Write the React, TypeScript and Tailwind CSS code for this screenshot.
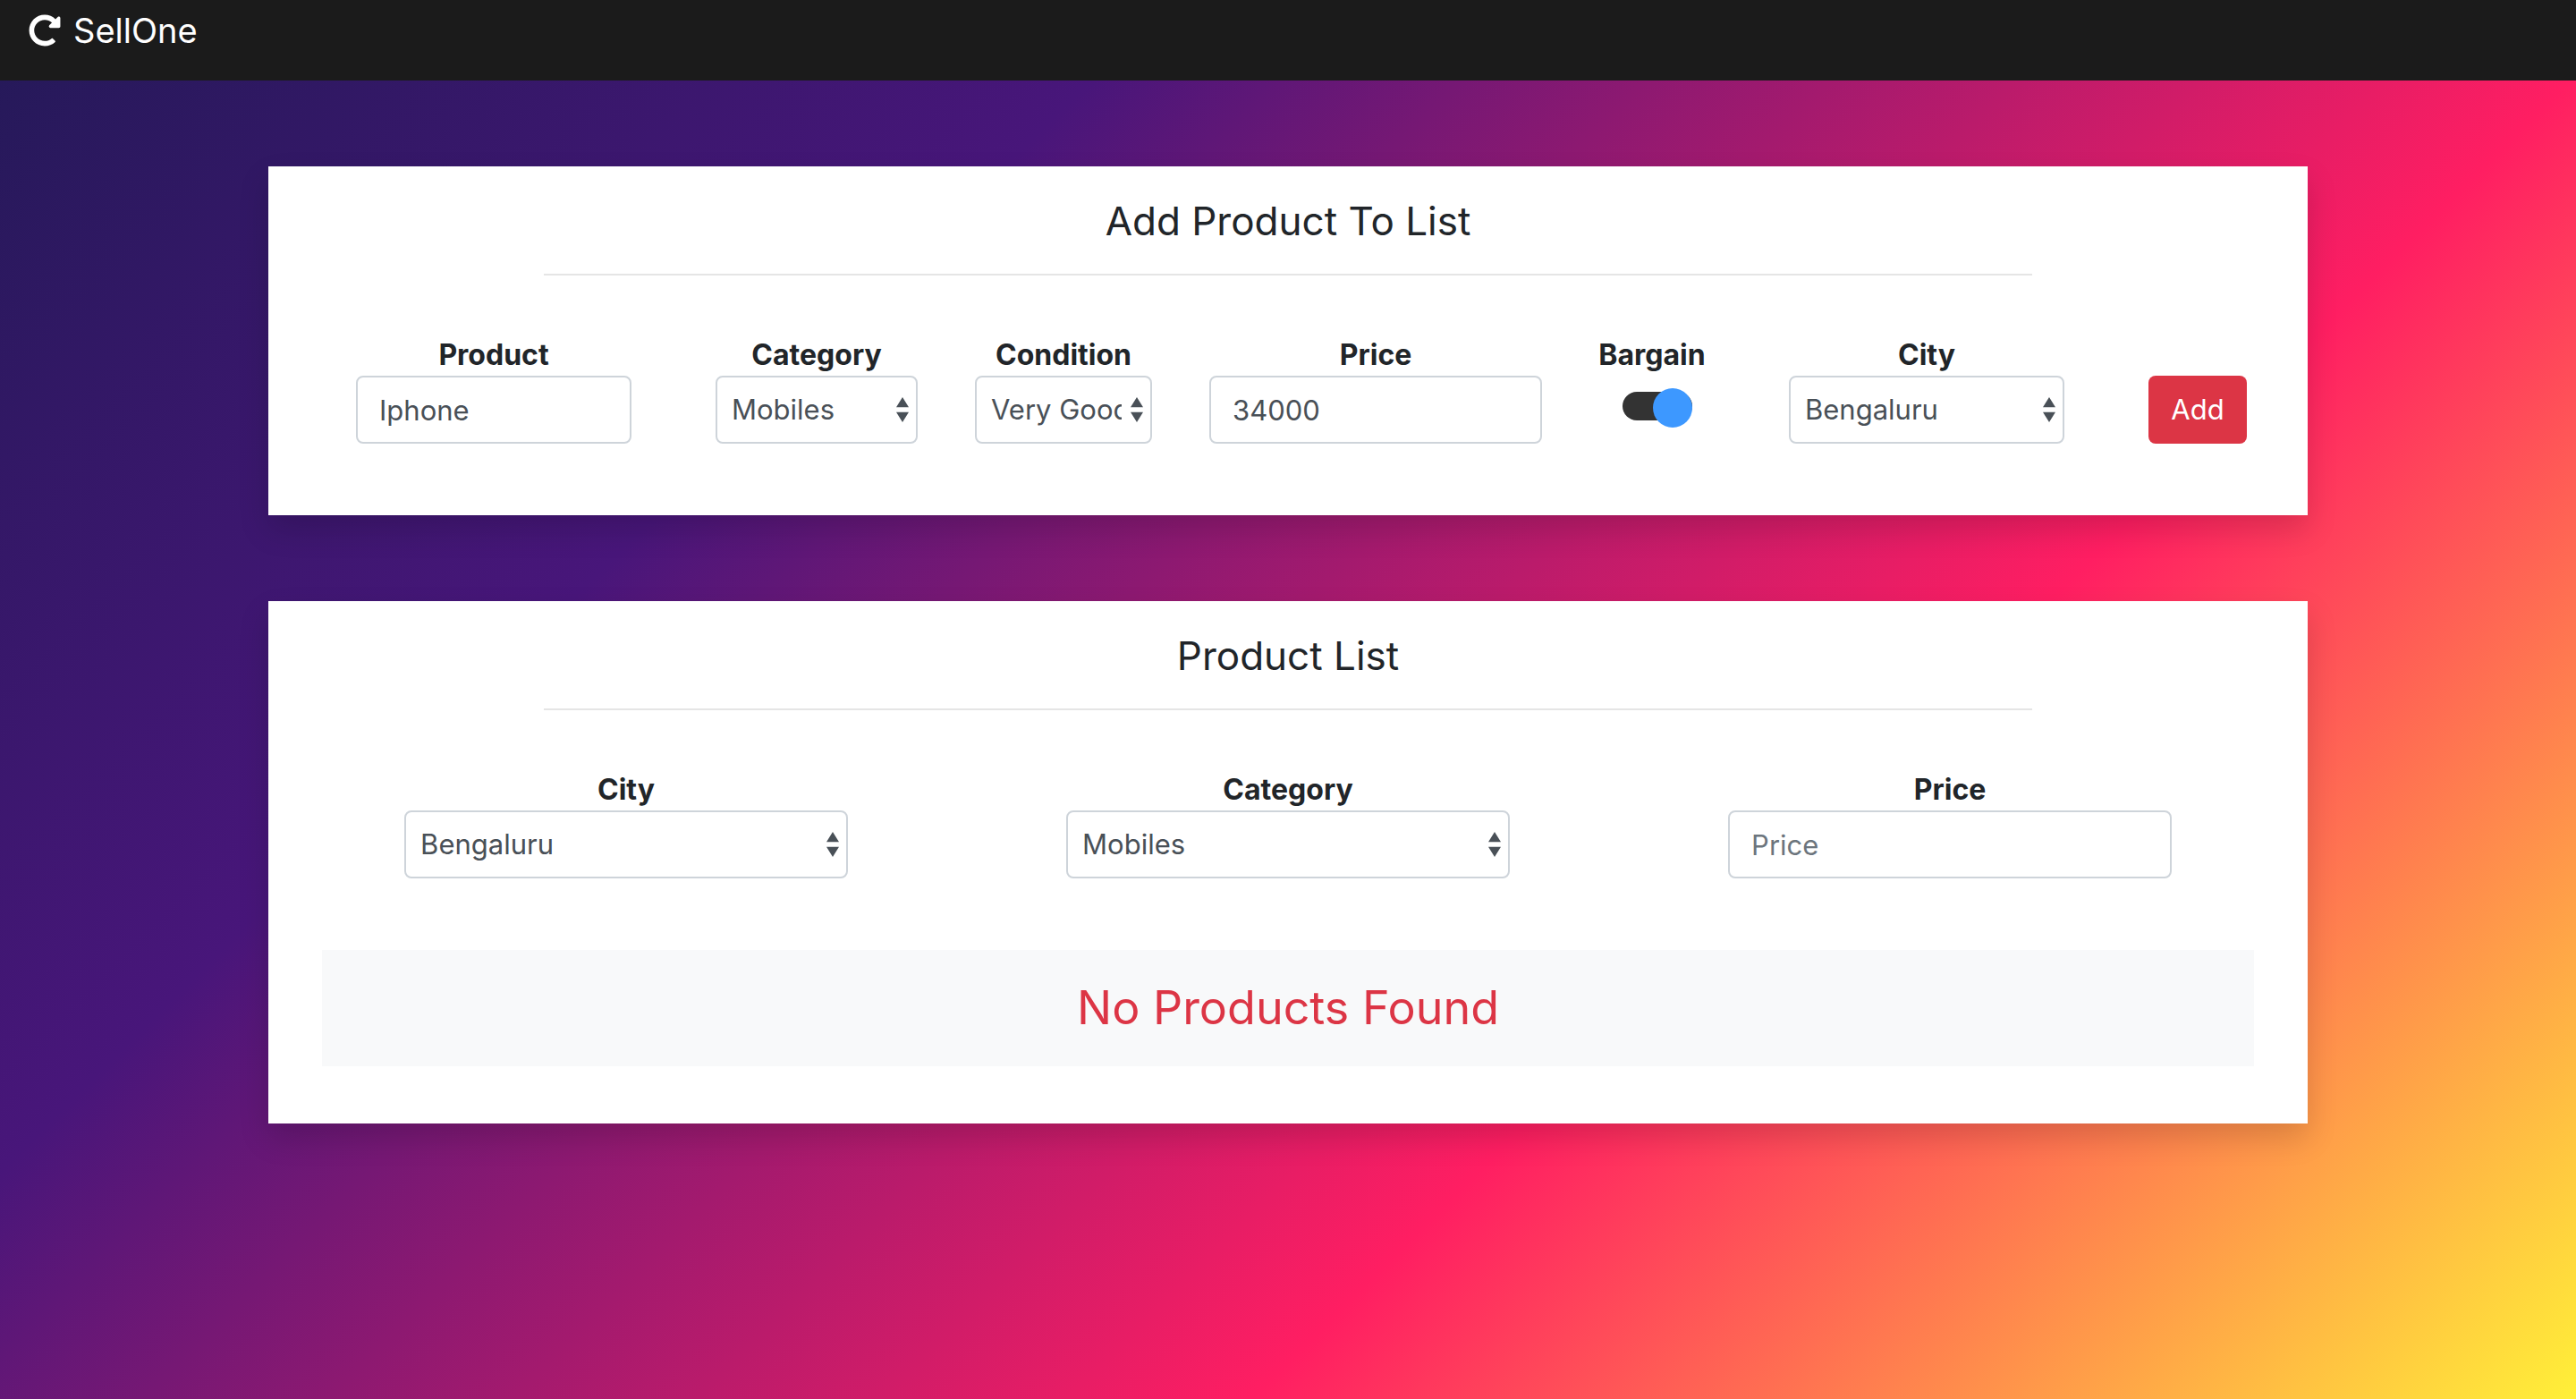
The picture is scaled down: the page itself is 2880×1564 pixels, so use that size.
import { useState } from "react";
import type { ReactNode } from "react";
import { FaRedoAlt } from "react-icons/fa";

const control =
  "block h-[76px] w-full rounded-lg border-2 border-[#ced4da] bg-white text-[31px] leading-[48px] text-[#495057] outline-none";

type SelectProps = { id: string; options: string[] };

function Select({ id, options }: SelectProps) {
  const [value, setValue] = useState(options[0]);
  return (
    <div className="relative">
      <select
        id={id}
        value={value}
        onChange={(e) => setValue(e.target.value)}
        className={`${control} appearance-none pr-8 pl-4`}
      >
        {options.map((option) => (
          <option key={option}>{option}</option>
        ))}
      </select>
      <svg
        viewBox="0 0 4 5"
        className="pointer-events-none absolute top-6 right-2.5 h-7 w-3.5 fill-[#495057]"
        preserveAspectRatio="none"
        aria-hidden="true"
      >
        <path d="M2 0L0 2h4zm0 5L0 3h4z" />
      </svg>
    </div>
  );
}

type FieldProps = { id: string; label: string; children: ReactNode };

function Field({ id, label, children }: FieldProps) {
  return (
    <div>
      <label htmlFor={id} className="block text-center leading-[46px] font-bold">
        {label}
      </label>
      {children}
    </div>
  );
}

function Card({ title, children }: { title: string; children: ReactNode }) {
  return (
    <section className="bg-white px-[60px] pt-8 shadow-[0_16px_32px_rgba(0,0,0,0.15)]">
      <h2 className="text-center text-[44px] leading-[58px]">{title}</h2>
      <hr className="mx-[11.5%] mt-[30px] border-t-2 border-[#e5e5e5]" />
      {children}
    </section>
  );
}

export default function App() {
  const [bargain, setBargain] = useState(true);
  return (
    <div className="flex min-h-screen flex-col font-[Inter,sans-serif] text-[32px] text-[#212529]">
      <header className="h-[90px] bg-[#1b1b1b] px-8">
        <a href="#" className="flex h-[68px] items-center gap-3.5 text-[38px] text-white">
          <FaRedoAlt className="size-9" aria-hidden="true" />
          SellOne
        </a>
      </header>

      <main className="flex grow flex-col items-center gap-24 bg-[linear-gradient(135deg,#26195a_0%,#48167a_28%,#ff1e62_66%,#fff038_100%)] py-24">
        <div className="flex w-full max-w-[2280px] flex-col gap-24">
          <Card title="Add Product To List">
            <form
              className="mr-2 ml-[38px] grid grid-cols-[308fr_94fr_226fr_64fr_198fr_64fr_372fr_45fr_156fr_75fr_308fr_94fr_110fr] items-end pt-[66px] pb-20"
              onSubmit={(e) => e.preventDefault()}
            >
              <Field id="product" label="Product">
                <input id="product" defaultValue="Iphone" className={`${control} px-6`} />
              </Field>
              <span />
              <Field id="category" label="Category">
                <Select id="category" options={["Mobiles", "Laptops", "Books"]} />
              </Field>
              <span />
              <Field id="condition" label="Condition">
                <Select id="condition" options={["Very Good", "Good", "Fair"]} />
              </Field>
              <span />
              <Field id="price" label="Price">
                <input id="price" defaultValue="34000" className={`${control} px-6`} />
              </Field>
              <span />
              <Field id="bargain" label="Bargain">
                <div className="flex h-[76px] justify-center pt-[18px] pl-3">
                  <div className="relative h-8 w-[78px] rounded-full bg-[#333]">
                    <input
                      id="bargain"
                      type="checkbox"
                      role="switch"
                      checked={bargain}
                      onChange={(e) => setBargain(e.target.checked)}
                      className="absolute -top-1 left-0 size-11 cursor-pointer appearance-none rounded-full bg-[#999] checked:right-0 checked:left-auto checked:bg-[#3d98ff]"
                    />
                  </div>
                </div>
              </Field>
              <span />
              <Field id="city" label="City">
                <Select id="city" options={["Bengaluru", "Mumbai", "Delhi"]} />
              </Field>
              <span />
              <button type="submit" className="h-[76px] rounded-lg bg-[#dc3545] text-[31px] text-white">
                Add
              </button>
            </form>
          </Card>

          <Card title="Product List">
            <div className="-mx-[30px] grid grid-cols-3 pt-[66px]">
              <div className="mx-auto w-[67%]">
                <Field id="filter-city" label="City">
                  <Select id="filter-city" options={["Bengaluru", "Mumbai", "Delhi"]} />
                </Field>
              </div>
              <div className="mx-auto w-[67%]">
                <Field id="filter-category" label="Category">
                  <Select id="filter-category" options={["Mobiles", "Laptops", "Books"]} />
                </Field>
              </div>
              <div className="mx-auto w-[67%]">
                <Field id="filter-price" label="Price">
                  <input
                    id="filter-price"
                    placeholder="Price"
                    className={`${control} px-6 placeholder:text-[#6c757d]`}
                  />
                </Field>
              </div>
            </div>
            <div className="pt-20 pb-16">
              <p className="bg-[#f8f9fa] py-8 text-center text-[52px] leading-[66px] text-[#dc3545]">
                No Products Found
              </p>
            </div>
          </Card>
        </div>
      </main>
    </div>
  );
}
